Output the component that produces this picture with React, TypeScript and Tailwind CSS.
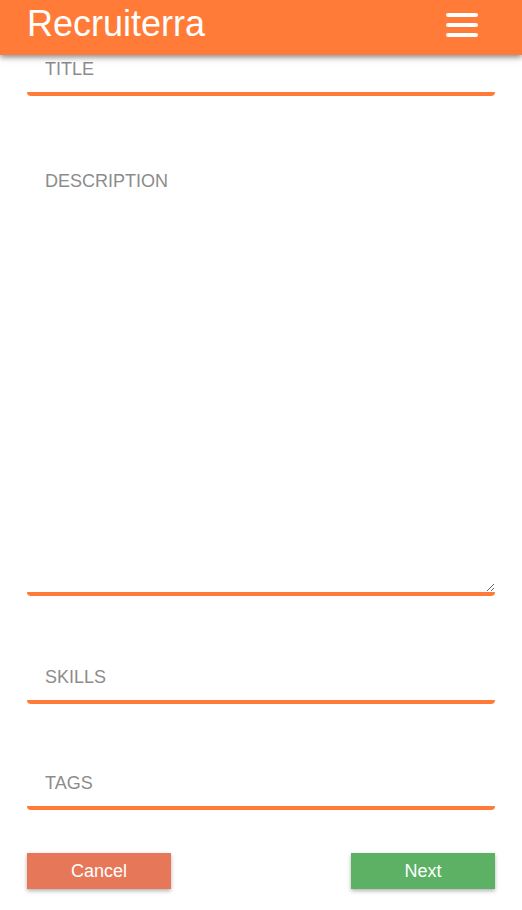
import React from "react";

const fieldClass =
  "block w-full bg-white border-0 border-b-4 border-[#ff7b37] rounded-b-[4px] pl-[18px] pr-2 text-[18px] text-[#333] outline-none placeholder:text-[#8c8c8c]";

const App = () => {
  return (
    <div className="min-h-[910px] bg-white" style={{ fontFamily: '"Liberation Sans", Arial, sans-serif' }}>
      {/* Header */}
      <header className="relative z-10 flex h-[55px] items-start justify-between bg-[#ff7b37] pl-[27px] pr-[44px] shadow-[0_2px_6px_rgba(0,0,0,0.5)]">
        <h1 className="mt-[6px] text-[36px] leading-[36px] font-normal text-white">Recruiterra</h1>
        <button className="mt-[13px] flex w-[32px] flex-col gap-[6px]">
          <span className="h-[4px] w-full rounded-full bg-white" />
          <span className="h-[4px] w-full rounded-full bg-white" />
          <span className="h-[4px] w-full rounded-full bg-white" />
        </button>
      </header>

      {/* Form */}
      <form className="px-[27px]">
        <input type="text" placeholder="TITLE" className={`${fieldClass} h-[41px] pt-[2px] pb-[10px]`} />

        <textarea
          placeholder="DESCRIPTION"
          className={`${fieldClass} mt-[54px] h-[446px] pt-[20px] leading-[22px]`}
        />

        <input type="text" placeholder="SKILLS" className={`${fieldClass} mt-[54px] h-[54px] pt-[4px]`} />

        <input type="text" placeholder="TAGS" className={`${fieldClass} mt-[52px] h-[54px] pt-[4px]`} />

        <div className="mt-[43px] flex justify-between">
          <button
            type="button"
            className="h-[36px] w-[144px] bg-[#e77759] text-[18px] text-white shadow-[0_2px_4px_rgba(0,0,0,0.3)]"
          >
            Cancel
          </button>
          <button
            type="button"
            className="h-[36px] w-[144px] bg-[#5cb165] text-[18px] text-white shadow-[0_2px_4px_rgba(0,0,0,0.3)]"
          >
            Next
          </button>
        </div>
      </form>
    </div>
  );
};

export default App;
